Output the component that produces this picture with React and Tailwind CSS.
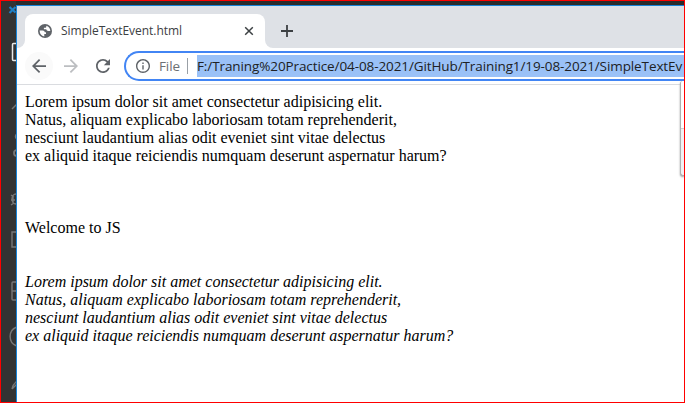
const LINES = [
  'Lorem ipsum dolor sit amet consectetur adipisicing elit.',
  'Natus, aliquam explicabo laboriosam totam reprehenderit,',
  'nesciunt laudantium alias odit eveniet sint vitae delectus',
  'ex aliquid itaque reiciendis numquam deserunt aspernatur harum?',
];

function ActivityBar() {
  return (
    <aside className="-mt-px w-[15px] shrink-0 bg-[#333333]">
      <svg width="15" height="402" viewBox="1 0 15 402" fill="none" className="block">
        <path d="M9.500 7l6 5.500M9.500 13l6-6" stroke="#1f7fc4" strokeWidth="2.200" />
        <path d="M17 43.500h-3.500q-1 0-1 1v15q0 1 1 1H17" stroke="#e8e8e8" strokeWidth="1.500" />
        <g stroke="#777" strokeWidth="1.400">
          <path d="M12 109l5-5" />
          <path d="M17 134a3 3 0 0 0 0 5M17 150a3 3 0 0 0 0 6" strokeWidth="1.800" />
          <path d="M11 195l3 2M11 200h4M11 205l3-2M16 194a4 5 0 0 0 0 10M13 195v8" />
          <path d="M17 232h-5v15h5" />
          <path d="M17 282h-4q-1 0-1 1v16q0 1 1 1h4M12 291h5" />
          <path d="M17 327a10 10 0 0 0 0 19" />
          <path d="M12 389q1-5 5-8M12 389l5-5" />
        </g>
      </svg>
    </aside>
  );
}

function TabStrip() {
  return (
    <div className="flex h-[42px] items-end bg-[#dee1e6]">
      <div className="h-full w-2 shrink-0 bg-white">
        <div className="h-full rounded-br-lg bg-[#dee1e6]" />
      </div>
      <div className="flex h-[34px] w-[240px] shrink-0 items-center rounded-t-lg bg-white pr-[11px] pl-[13px]">
        <svg width="14" height="14" viewBox="0 0 14 14" className="shrink-0">
          <circle cx="7" cy="7" r="7" fill="#5f6368" />
          <path d="M1.600 6.500h3.200q1.900 0 2 1.700h1.200v1.700H6.300v2.500Q1.800 11.800 1.600 6.500zM8.300 1.700v1.100q0 1-1 1H5.900v1.500h2.300q.4 1.700 1.900 1.700h2.200Q12.200 3 8.300 1.700z" fill="#fff" />
        </svg>
        <span className="ml-[9px] whitespace-nowrap font-['Open_Sans','Noto_Sans',sans-serif] text-[12px] leading-4 tracking-[-0.03px] text-[#3c4043]">
          SimpleTextEvent.html
        </span>
        <svg width="10" height="10" viewBox="0 0 10 10" className="ml-auto shrink-0" stroke="#3c4043" strokeWidth="1.500">
          <path d="M1.200 1.200l7.600 7.600M8.800 1.200L1.200 8.800" />
        </svg>
      </div>
      <div className="h-full w-2 shrink-0 bg-[linear-gradient(to_bottom,#dee1e6_50%,#fff_50%)]">
        <div className="h-full rounded-bl-lg bg-[#dee1e6]" />
      </div>
      <svg width="12" height="12" viewBox="0 0 12 12" className="mb-[11px] ml-2 shrink-0" stroke="#3c4043" strokeWidth="1.800">
        <path d="M6 0v12M0 6h12" />
      </svg>
    </div>
  );
}

function Toolbar() {
  return (
    <div className="flex h-[37px] items-start border-b border-[#dadce0] bg-white pt-[3px] pl-2">
      <div className="mt-px flex size-[28px] shrink-0 items-center justify-center rounded-full bg-[#fafafa]">
        <svg width="14" height="14" viewBox="4 4 16 16" fill="#5f6368">
          <path d="M20 11H7.830l5.590-5.590L12 4l-8 8 8 8 1.410-1.410L7.830 13H20v-2z" />
        </svg>
      </div>
      <svg width="14" height="14" viewBox="4 4 16 16" fill="#bcbec1" className="mt-2 ml-[11px] shrink-0">
        <path d="M12 4l-1.410 1.410L16.170 11H4v2h12.170l-5.580 5.590L12 20l8-8z" />
      </svg>
      <svg width="14" height="14" viewBox="4 4 16 16" fill="#5f6368" className="mt-2 ml-[18px] shrink-0">
        <path d="M17.650 6.350C16.200 4.900 14.210 4 12 4c-4.420 0-7.990 3.580-7.990 8s3.570 8 7.990 8c3.730 0 6.840-2.550 7.730-6h-2.080c-.82 2.330-3.040 4-5.650 4-3.310 0-6-2.690-6-6s2.690-6 6-6c1.660 0 3.140.69 4.220 1.780L13 11h7V4l-2.350 2.350z" />
      </svg>
      <div className="ml-[14px] flex h-[30px] min-w-0 flex-1 items-center rounded-l-full border-y-2 border-l-2 border-[#4285f4] pl-[10px] font-['Open_Sans','Noto_Sans',sans-serif] text-[13.500px] leading-[22px]">
        <svg width="14" height="14" viewBox="2 2 20 20" fill="#5f6368" className="shrink-0">
          <path d="M11 7h2v2h-2zm0 4h2v6h-2zm1-9C6.480 2 2 6.480 2 12s4.480 10 10 10 10-4.480 10-10S17.520 2 12 2zm0 18c-4.410 0-8-3.590-8-8s3.590-8 8-8 8 3.590 8 8-3.590 8-8 8z" />
        </svg>
        <span className="ml-[9px] w-5 shrink-0 whitespace-nowrap tracking-[-0.1px] text-[#6c7074]">File</span>
        <span className="ml-[8px] h-4 w-px shrink-0 bg-[#9aa0a6]" />
        <span className="ml-[9px] h-[22px] min-w-0 flex-1 whitespace-nowrap bg-[#9ac1f7] text-[13.500px] tracking-[-0.100px] text-[#202124]">
          F:/Traning%20Practice/04-08-2021/GitHub/Training1/19-08-2021/SimpleTextEv
        </span>
      </div>
    </div>
  );
}

export default function App() {
  return (
    <div className="relative flex h-[403px] w-[685px] overflow-hidden border border-[#ff0000] bg-[#333333]">
      <ActivityBar />
      <div className="flex min-w-0 flex-1 flex-col bg-[#2b2b2b] pt-1">
        <div className="flex min-h-0 flex-1 flex-col border-t border-l border-[#1683d8] bg-white">
          <TabStrip />
          <Toolbar />
          <main className="p-2 font-['Liberation_Serif',serif] text-[16px] leading-[18px] text-black">
            {LINES.map((line) => (
              <p key={line} className="whitespace-nowrap">{line}</p>
            ))}
            <p className="mt-[54px]">Welcome to JS</p>
            <div className="mt-9 italic">
              {LINES.map((line) => (
                <p key={line} className="whitespace-nowrap">{line}</p>
              ))}
            </div>
          </main>
        </div>
      </div>
      <div className="absolute top-[80px] right-0 h-[95px] w-[4px] overflow-hidden rounded-l-[3px] border-b border-l border-[#b0b0b0] bg-[#f1f1f3] shadow-[0_1px_2px_#999]">
        <div className="h-[48px] border-b border-[#d0d0d0] bg-white" />
      </div>
    </div>
  );
}
